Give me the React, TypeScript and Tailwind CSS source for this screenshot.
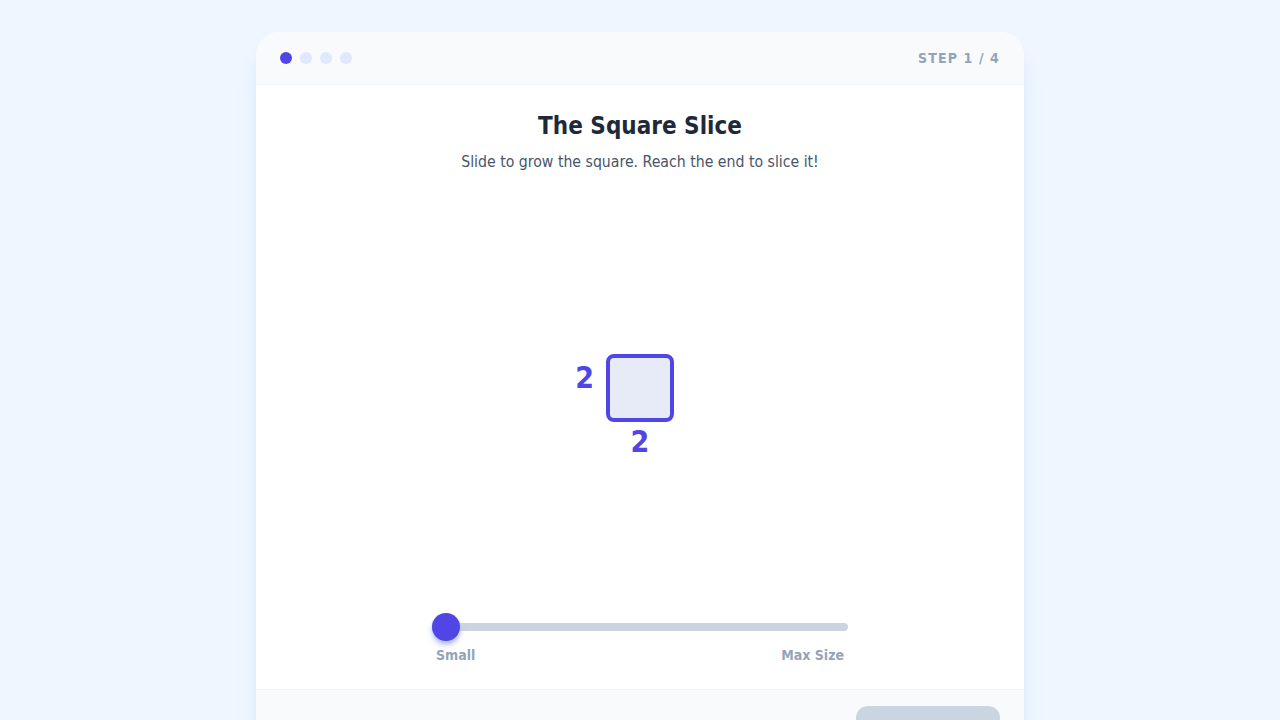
import React from "react"

const font = { fontFamily: '"DejaVu Sans Condensed", "DejaVu Sans", sans-serif' }

export default function App() {
  const steps = [0, 1, 2, 3]
  const current = 0

  return (
    <div className="min-h-screen bg-[#eff6ff] flex justify-center pt-8" style={font}>
      <div className="w-[768px] bg-white rounded-3xl shadow-xl shadow-[#bfdbfe]/60 overflow-hidden flex flex-col">
        {/* Header */}
        <div className="h-[53px] flex items-center justify-between px-6 bg-[#f8fafc] border-b border-[#f1f5f9]">
          <div className="flex items-center gap-2">
            {steps.map((s) => (
              <div
                key={s}
                className={s === current ? "w-3 h-3 rounded-full bg-[#4f46e5]" : "w-3 h-3 rounded-full bg-[#e0e7ff]"}
              />
            ))}
          </div>
          <span className="text-sm leading-none font-bold tracking-[0.08em] text-[#94a3b8]">STEP 1 / 4</span>
        </div>

        {/* Body */}
        <div className="h-[604px] flex flex-col px-6 pt-[25px] pb-6">
          <div className="text-center">
            <h1 className="text-2xl font-bold text-[#1e293b]">The Square Slice</h1>
            <p className="mt-2 text-[15.7px] leading-6 text-[#475569]">Slide to grow the square. Reach the end to slice it!</p>
          </div>

          <div className="flex-1 flex items-center justify-center pb-[11px]">
            <div className="relative w-[68px] h-[68px] rounded-lg border-4 border-[#4f46e5] bg-[#e6ebf7]">
              <span className="absolute right-full mr-[16px] top-[2px] text-3xl leading-9 font-bold text-[#4f46e5]">2</span>
              <span className="absolute top-full left-1/2 -translate-x-1/2 mt-[6px] text-3xl leading-9 font-bold text-[#4f46e5]">2</span>
            </div>
          </div>

          <div className="w-[416px] mx-auto">
            <div className="relative h-7 flex items-center">
              <div className="h-2 w-full rounded-full bg-[#cbd5e1]" />
              <div className="absolute left-0 top-0 w-7 h-7 rounded-full bg-[#4f46e5] shadow-md shadow-[#a5b4fc]" />
            </div>
            <div className="mt-1 flex justify-between px-1 text-sm font-bold text-[#94a3b8]">
              <span>Small</span>
              <span>Max Size</span>
            </div>
          </div>
        </div>

        {/* Footer */}
        <div className="flex justify-end px-6 py-4 bg-[#f8fafc] border-t border-[#f1f5f9]">
          <button disabled className="w-36 h-12 rounded-xl bg-[#cbd5e1] text-white font-bold">
            Next
          </button>
        </div>
      </div>
    </div>
  )
}
